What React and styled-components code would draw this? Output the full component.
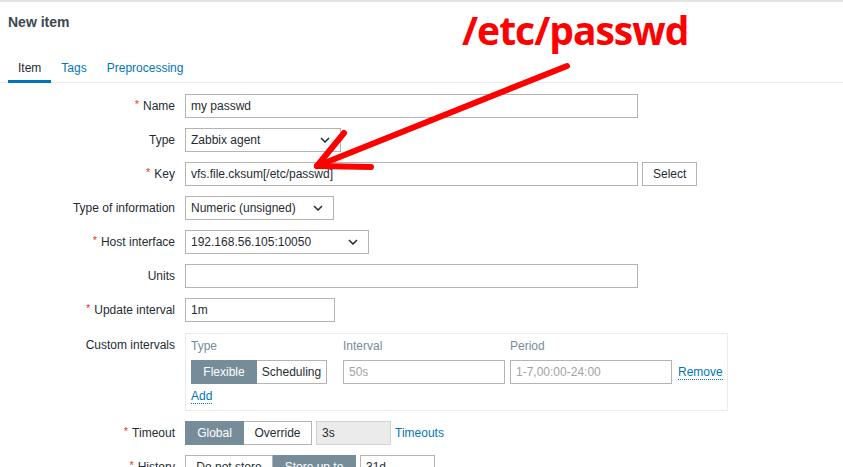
import styled, { createGlobalStyle } from "styled-components";

const GlobalStyle = createGlobalStyle`
  html, body {
    margin: 0;
    padding: 0;
    background: #fff;
    overflow: hidden;
  }
  body {
    font-family: "Liberation Sans", Arial, sans-serif;
    font-size: 12px;
    color: #1f2c33;
  }
`;

const Page = styled.div`
  position: relative;
  width: 843px;
  height: 467px;
  border-top: 2px solid #e4e4e4;
  box-sizing: border-box;
`;

const Title = styled.h1`
  margin: 0 0 23px;
  padding: 11px 0 0 8px;
  font-size: 14px;
  line-height: 18px;
  font-weight: bold;
  color: #3b4850;
`;

const TabList = styled.div`
  display: flex;
  padding-left: 8px;
  border-bottom: 1px solid #ebeef0;
`;

const Tab = styled.div`
  padding: 4px 10px 2px;
  line-height: 20px;
  margin-bottom: -1px;
  border-bottom: 3px solid ${(p) => (p.active ? "#0275b8" : "transparent")};
  color: ${(p) => (p.active ? "#1f2c33" : "#0275b8")};
`;

const Form = styled.div`
  display: flex;
  flex-direction: column;
  margin-top: 11px;
`;

const Row = styled.div`
  display: grid;
  grid-template-columns: 175px 1fr;
  column-gap: 10px;
  align-items: start;
  margin-bottom: ${(p) => p.mb ?? 10}px;
  margin-top: ${(p) => p.mt ?? 0}px;
`;

const Label = styled.div`
  height: 24px;
  text-align: right;
  line-height: 24px;
  white-space: nowrap;
`;

const Req = styled.span`
  color: #e33734;
  font-size: 11px;
  line-height: 1;
  vertical-align: 2px;
  margin-right: 4px;
`;

const Field = styled.div`
  display: flex;
  align-items: center;
  gap: ${(p) => p.gap ?? 4}px;
`;

const Input = styled.input`
  box-sizing: border-box;
  width: ${(p) => p.w}px;
  height: 24px;
  margin: 0;
  padding: 0 5px;
  border: 1px solid #b4b4b4;
  background: ${(p) => (p.disabled ? "#ebebeb" : "#fff")};
  font-family: inherit;
  font-size: 12px;
  color: #1f2c33;
  outline: none;
  &::placeholder {
    color: #a3a3a3;
  }
  &:disabled {
    border-color: #d2d2d2;
    color: #1f2c33;
  }
`;

const Select = styled.div`
  box-sizing: border-box;
  width: ${(p) => p.w}px;
  height: 24px;
  padding: 0 10px 0 5px;
  border: 1px solid #b4b4b4;
  display: flex;
  align-items: center;
  justify-content: space-between;
  background: #fff;
`;

const Button = styled.div`
  box-sizing: border-box;
  height: 24px;
  padding: 0 10px;
  border: 1px solid #b4b4b4;
  display: flex;
  align-items: center;
  background: #fff;
`;

const Segmented = styled.div`
  display: flex;
`;

const Seg = styled.div`
  box-sizing: border-box;
  width: ${(p) => p.w}px;
  height: 24px;
  display: flex;
  align-items: center;
  justify-content: center;
  border: 1px solid ${(p) => (p.on ? "#768d99" : "#b4b4b4")};
  background: ${(p) => (p.on ? "#768d99" : "#fff")};
  color: ${(p) => (p.on ? "#fff" : "#1f2c33")};
  & + & {
    border-left: none;
  }
`;

const Link = styled.span`
  color: #0275b8;
  border-bottom: ${(p) => (p.dotted ? "1px dotted #0275b8" : "none")};
  line-height: 14px;
`;

const IntervalBox = styled.div`
  box-sizing: border-box;
  width: 543px;
  height: 78px;
  border: 1px solid #ebebeb;
  padding: 3px 5px 0;
`;

const IntervalGrid = styled.div`
  display: grid;
  grid-template-columns: 152px 167px 168px auto;
  align-items: center;
`;

const ColHead = styled.div`
  line-height: 18px;
  color: #768d99;
  margin-bottom: 5px;
`;

const AddRow = styled.div`
  margin-top: 4px;
  line-height: 16px;
`;

const Annotation = styled.div`
  position: absolute;
  left: 462px;
  top: 2px;
  font-family: "Open Sans", "DejaVu Sans", sans-serif;
  font-weight: bold;
  font-size: 39px;
  letter-spacing: -1px;
  color: #ff0000;
  line-height: 52px;
  pointer-events: none;
`;

const Overlay = styled.svg`
  position: absolute;
  left: 0;
  top: -2px;
  pointer-events: none;
`;

const Chevron = () => (
  <svg width="10" height="6" viewBox="0 0 10 6">
    <path d="M1 1l4 4 4-4" fill="none" stroke="#1f2c33" strokeWidth="1.5" />
  </svg>
);

const FormRow = ({ label, required, children, ...rest }) => (
  <Row {...rest}>
    <Label>
      {required && <Req>*</Req>}
      {label}
    </Label>
    <Field>{children}</Field>
  </Row>
);

export default function App() {
  return (
    <>
      <GlobalStyle />
      <Page>
        <Title>New item</Title>
        <TabList>
          <Tab active>Item</Tab>
          <Tab>Tags</Tab>
          <Tab>Preprocessing</Tab>
        </TabList>

        <Form>
          <FormRow label="Name" required>
            <Input w={453} defaultValue="my passwd" />
          </FormRow>
          <FormRow label="Type">
            <Select w={156}>
              Zabbix agent
              <Chevron />
            </Select>
          </FormRow>
          <FormRow label="Key" required>
            <Input w={453} defaultValue="vfs.file.cksum[/etc/passwd]" />
            <Button>Select</Button>
          </FormRow>
          <FormRow label="Type of information">
            <Select w={149}>
              Numeric (unsigned)
              <Chevron />
            </Select>
          </FormRow>
          <FormRow label="Host interface" required>
            <Select w={184}>
              192.168.56.105:10050
              <Chevron />
            </Select>
          </FormRow>
          <FormRow label="Units">
            <Input w={453} defaultValue="" />
          </FormRow>
          <FormRow label="Update interval" required>
            <Input w={150} defaultValue="1m" />
          </FormRow>
          <FormRow label="Custom intervals" mt={1} mb={10}>
            <IntervalBox>
              <IntervalGrid>
                <ColHead>Type</ColHead>
                <ColHead>Interval</ColHead>
                <ColHead>Period</ColHead>
                <div />
                <Segmented>
                  <Seg w={66} on>
                    Flexible
                  </Seg>
                  <Seg w={70}>Scheduling</Seg>
                </Segmented>
                <Input w={162} placeholder="50s" />
                <Input w={162} placeholder="1-7,00:00-24:00" />
                <Link dotted>Remove</Link>
              </IntervalGrid>
              <AddRow>
                <Link dotted>Add</Link>
              </AddRow>
            </IntervalBox>
          </FormRow>
          <FormRow label="Timeout" required>
            <Segmented>
              <Seg w={59} on>
                Global
              </Seg>
              <Seg w={68}>Override</Seg>
            </Segmented>
            <Input w={75} defaultValue="3s" disabled />
            <Link>Timeouts</Link>
          </FormRow>
          <FormRow label="History" required>
            <Segmented>
              <Seg w={88}>Do not store</Seg>
              <Seg w={83} on>
                Store up to
              </Seg>
            </Segmented>
            <Input w={75} defaultValue="31d" />
          </FormRow>
        </Form>

        <Annotation>/etc/passwd</Annotation>
        <Overlay width="843" height="467" viewBox="0 0 843 467">
          <g stroke="#ff0000" strokeWidth="6" strokeLinecap="round" fill="none">
            <line x1="567" y1="66" x2="317" y2="166" />
            <line x1="317" y1="166" x2="344" y2="133" />
            <line x1="317" y1="166" x2="371" y2="167" />
          </g>
        </Overlay>
      </Page>
    </>
  );
}
